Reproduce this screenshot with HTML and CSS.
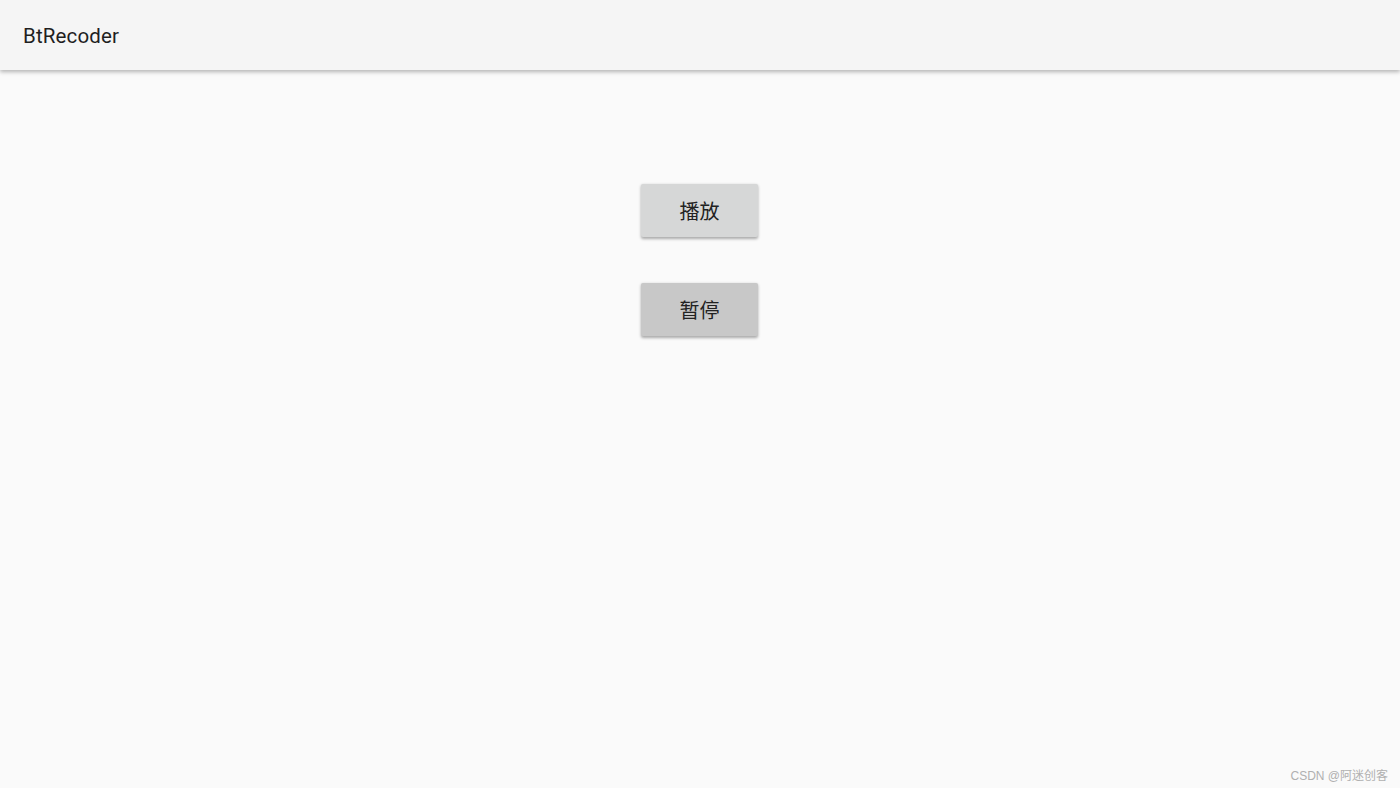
FILE: index.html
```html
<!DOCTYPE html>
<html lang="zh">
<head>
<meta charset="utf-8">
<title>BtRecoder</title>
<link rel="stylesheet" href="styles.css">
</head>
<body>
<header class="appbar"><h1 class="title">BtRecoder</h1></header>
<main class="content">
  <button class="btn btn-play">播放</button>
  <button class="btn btn-pause">暂停</button>
</main>
<div class="watermark">CSDN @阿迷创客</div>
</body>
</html>
```
FILE: styles.css
```css
html, body {
  margin: 0;
  padding: 0;
  height: 100%;
}
body {
  background: #fafafa;
  font-family: Roboto, "Noto Sans CJK SC", sans-serif;
  position: relative;
  overflow: hidden;
}
.appbar {
  height: 70px;
  background: #f5f5f5;
  box-shadow: 0 2px 4px rgba(0,0,0,0.28);
  display: flex;
  align-items: center;
  padding-left: 23px;
  position: relative;
  z-index: 1;
}
.title {
  margin: 0;
  font-size: 20.5px;
  font-weight: 400;
  color: #1f1f1f;
  letter-spacing: 0.15px;
  padding-top: 1px;
}
.content {
  display: flex;
  flex-direction: column;
  align-items: center;
  padding-top: 114px;
  padding-right: 1px;
  gap: 46px;
}
.btn {
  width: 117px;
  height: 53px;
  border: none;
  border-radius: 2px;
  font-family: Roboto, "Noto Sans CJK SC", sans-serif;
  font-size: 20px;
  color: #222;
  box-shadow: 0 1.5px 3px rgba(0,0,0,0.32);
  padding: 0;
}
.btn-play { background: #d6d7d7; }
.btn-pause { background: #c8c8c8; }
.watermark {
  position: absolute;
  right: 12px;
  bottom: 5px;
  font-size: 12px;
  color: #b0b0b0;
  font-family: "Liberation Sans", "Noto Sans CJK SC", sans-serif;
}
```
